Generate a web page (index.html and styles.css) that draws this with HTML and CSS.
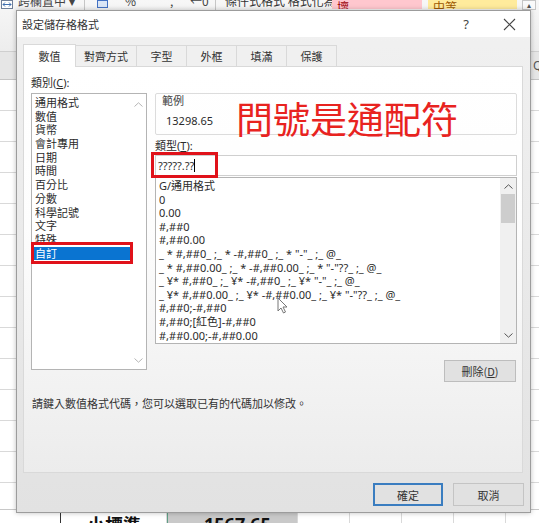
FILE: index.html
```html
<!DOCTYPE html>
<html lang="zh-Hant">
<head>
    <meta charset="UTF-8">
    <title>設定儲存格格式</title>
    <link rel="stylesheet" href="styles.css">
</head>
<body>

    <!-- Worksheet behind the dialog -->
    <div class="sheet">
        <div class="ribbon">
            <div class="ribbon-tools">
                <span class="tool merge-icon">
                    <svg width="12" height="9" viewBox="0 0 12 9"><rect x="0.5" y="0.5" width="11" height="8" fill="#fff" stroke="#6f7f99"/><path d="M2 4.5h8M2 4.5l2-2M2 4.5l2 2M10 4.5l-2-2M10 4.5l-2 2" stroke="#3f6fb0" fill="none"/></svg>
                </span>
                <span class="tool tool-text merge-text">跨欄置中 ▾</span>
                <span class="sep"></span>
                <span class="tool money-icon"></span>
                <span class="tool tool-text pct">%</span>
                <span class="tool tool-text comma">,</span>
                <span class="tool tool-text dec">←0</span>
                <span class="sep"></span>
                <span class="tool tool-text cond">條件式格式 格式化為</span>
                <span class="style-cell bad">壞</span>
                <span class="style-cell neutral">中等</span>
                <span class="style-more">▴</span>
            </div>
        </div>
        <div class="col-head"><span class="col-letter">Q</span></div>
        <div class="rows"></div>
        <div class="last-row">
            <div class="cell cell-first"></div>
            <div class="cell cell-name">小標準</div>
            <div class="cell cell-total">1567.65</div>
            <div class="cell cell-plain"></div>
            <div class="cell cell-plain"></div>
            <div class="cell cell-plain"></div>
            <div class="cell cell-plain"></div>
            <div class="cell cell-plain"></div>
        </div>
    </div>

    <!-- Format Cells dialog -->
    <div class="dialog">
        <div class="titlebar">
            <span class="title">設定儲存格格式</span>
            <span class="help">?</span>
            <span class="close">
                <svg width="13" height="13" viewBox="0 0 13 13"><path d="M1 1L12 12M12 1L1 12" stroke="#444" stroke-width="1.1"/></svg>
            </span>
        </div>

        <div class="tabs">
            <div class="tab active">數值</div>
            <div class="tab">對齊方式</div>
            <div class="tab">字型</div>
            <div class="tab">外框</div>
            <div class="tab">填滿</div>
            <div class="tab">保護</div>
        </div>

        <div class="panel">
            <div class="columns">
                <div class="col-left">
                    <div class="field-label">類別(<u>C</u>):</div>
                    <div class="listbox category-list">
                        <ul class="items">
                            <li>通用格式</li>
                            <li>數值</li>
                            <li>貨幣</li>
                            <li>會計專用</li>
                            <li>日期</li>
                            <li>時間</li>
                            <li>百分比</li>
                            <li>分數</li>
                            <li>科學記號</li>
                            <li>文字</li>
                            <li>特殊</li>
                            <li class="selected">自訂</li>
                        </ul>
                        <div class="scrollbar plain">
                            <span class="arrow"><svg width="9" height="5" viewBox="0 0 9 5"><path d="M0.5 4.5L4.5 0.8L8.5 4.5" fill="none" stroke="#b5b5b5"/></svg></span>
                            <span class="arrow"><svg width="9" height="5" viewBox="0 0 9 5"><path d="M0.5 0.5L4.5 4.2L8.5 0.5" fill="none" stroke="#b5b5b5"/></svg></span>
                        </div>
                    </div>
                </div>

                <div class="col-right">
                    <div class="sample">
                        <div class="sample-label">範例</div>
                        <div class="sample-value">13298.65</div>
                    </div>
                    <div class="field-label type-label">類型(<u>T</u>):</div>
                    <div class="type-input">?????.??<span class="caret"></span></div>
                    <div class="listbox format-list">
                        <ul class="items">
                            <li>G/通用格式</li>
                            <li>0</li>
                            <li>0.00</li>
                            <li>#,##0</li>
                            <li>#,##0.00</li>
                            <li>_ * #,##0_ ;_ * -#,##0_ ;_ * "-"_ ;_ @_</li>
                            <li>_ * #,##0.00_ ;_ * -#,##0.00_ ;_ * "-"??_ ;_ @_</li>
                            <li>_ ¥* #,##0_ ;_ ¥* -#,##0_ ;_ ¥* "-"_ ;_ @_</li>
                            <li>_ ¥* #,##0.00_ ;_ ¥* -#,##0.00_ ;_ ¥* "-"??_ ;_ @_</li>
                            <li>#,##0;-#,##0</li>
                            <li>#,##0;[紅色]-#,##0</li>
                            <li>#,##0.00;-#,##0.00</li>
                        </ul>
                        <div class="scrollbar">
                            <span class="arrow"><svg width="9" height="5" viewBox="0 0 9 5"><path d="M0.5 4.5L4.5 0.8L8.5 4.5" fill="none" stroke="#555"/></svg></span>
                            <span class="thumb"></span>
                            <span class="arrow down"><svg width="9" height="5" viewBox="0 0 9 5"><path d="M0.5 0.5L4.5 4.2L8.5 0.5" fill="none" stroke="#555"/></svg></span>
                        </div>
                    </div>
                    <div class="delete-row">
                        <button class="btn btn-delete">刪除(<u>D</u>)</button>
                    </div>
                </div>
            </div>

            <p class="hint">請鍵入數值格式代碼，您可以選取已有的代碼加以修改。</p>

            <!-- annotations drawn over the dialog -->
            <div class="callout">問號是通配符</div>
            <div class="mark mark-type"></div>
            <div class="mark mark-custom"></div>
            <svg class="pointer" width="12" height="17" viewBox="0 0 12 17"><path d="M1 1V14L4 11L6.5 16L8.5 15L6 10H10Z" fill="#fff" stroke="#777" stroke-width="1"/></svg>
        </div>

        <div class="footer">
            <button class="btn btn-default">確定</button>
            <button class="btn btn-cancel">取消</button>
        </div>
    </div>

</body>
</html>
```

FILE: styles.css
```css
* {
    box-sizing: border-box;
}

body {
    margin: 0;
    width: 539px;
    height: 523px;
    overflow: hidden;
    position: relative;
    background: #fff;
    font-family: "Noto Sans", "Noto Sans CJK TC", sans-serif;
    color: #2b2b2b;
}

/* ---------- worksheet ---------- */
.sheet {
    display: flex;
    flex-direction: column;
    height: 523px;
}

.ribbon {
    height: 52px;
    background: linear-gradient(#f7f7f7, #ededed);
    border-bottom: 1px solid #cfcfcf;
}

.ribbon-tools {
    display: flex;
    align-items: flex-start;
    height: 10px;
    overflow: hidden;
}

.tool {
    flex: none;
}

.tool-text {
    font-family: "Noto Sans CJK TC", sans-serif;
    font-size: 12px;
    line-height: 14px;
    margin-top: -6px;
    color: #444;
    overflow: hidden;
    white-space: nowrap;
}

.merge-icon {
    width: 18px;
    padding-left: 1px;
    line-height: 0;
}

.merge-text {
    width: 66px;
}

.sep {
    width: 1px;
    height: 10px;
    background: #c6c6c6;
    margin-right: 12px;
    flex: none;
}

.money-icon {
    width: 11px;
    height: 8px;
    border: 1px solid #4472c4;
    background: #dbe6f6;
    margin-right: 17px;
}

.pct {
    width: 45px;
}

.comma {
    width: 20px;
}

.dec {
    width: 25px;
}

.cond {
    width: 107px;
    margin-left: -3px;
    color: #333;
}

.style-cell {
    flex: none;
    height: 9px;
    width: 90px;
    margin-right: 6px;
    padding-left: 5px;
    font-family: "Noto Sans CJK TC", sans-serif;
    font-size: 12px;
    line-height: 14px;
    overflow: hidden;
}

.style-cell.bad {
    background: #ffc7ce;
    color: #9c0006;
}

.style-cell.neutral {
    background: #ffeb9c;
    color: #9c5700;
    width: 89px;
    margin-right: 5px;
}

.style-more {
    flex: none;
    width: 14px;
    height: 10px;
    border: 1px solid #c6c6c6;
    font-size: 8px;
    line-height: 8px;
    text-align: center;
    color: #555;
    background: #fafafa;
}

.col-head {
    height: 28px;
    background: #e6e6e6;
    border-bottom: 1px solid #c4c4c4;
    display: flex;
    justify-content: flex-end;
    align-items: center;
}

.col-letter {
    font-size: 12px;
    color: #555;
    width: 6px;
    overflow: hidden;
}

.rows {
    flex: 1;
    background:
        repeating-linear-gradient(to bottom, #fff 0 30px, #d9d9d9 30px 31px);
}

.last-row {
    height: 14px;
    display: flex;
    border-top: 1px solid #c8c8c8;
    overflow: hidden;
}

.cell {
    flex: none;
    border-right: 1px solid #d9d9d9;
    font-family: "Noto Sans CJK TC", sans-serif;
    font-weight: bold;
    font-size: 18px;
    line-height: 24px;
    padding-top: 2px;
    color: #111;
}

.cell-first {
    width: 61px;
    border-right: 1.5px solid #333;
}

.cell-name {
    width: 106px;
    padding-left: 26px;
}

.cell-total {
    width: 131px;
    background: #c9c9c9;
    border-left: 1px solid #5f9f86;
    padding-left: 36px;
    font-family: "Noto Sans", sans-serif;
}

.cell-plain {
    width: 52px;
}

/* ---------- dialog ---------- */
.dialog {
    position: absolute;
    left: 16px;
    top: 10px;
    width: 515px;
    height: 503px;
    border: 1px solid #9c9c9c;
    box-shadow: 0 0 5px rgba(0, 0, 0, 0.25);
    background: linear-gradient(#f1f1f1, #e2e2e2);
    display: flex;
    flex-direction: column;
    font-size: 11px;
}

.titlebar {
    height: 26px;
    flex: none;
    background: #fff;
    display: flex;
    align-items: center;
    padding-left: 5px;
}

.title {
    font-family: "Noto Sans CJK TC", sans-serif;
    font-size: 11px;
    color: #333;
}

.help {
    margin-left: auto;
    font-size: 13px;
    color: #444;
}

.close {
    margin: 0 14px 0 34px;
    line-height: 0;
}

.tabs {
    display: flex;
    align-items: flex-start;
    height: 22px;
    margin: 8px 0 0 6px;
    position: relative;
    z-index: 1;
    flex: none;
}

.tab {
    height: 21px;
    min-width: 51px;
    padding: 0 8px;
    border: 1px solid #d9d9d9;
    border-bottom: none;
    margin-right: -1px;
    background: #f0f0f0;
    font-family: "Noto Sans CJK TC", sans-serif;
    line-height: 20px;
    text-align: center;
    color: #333;
}

.tab.active {
    height: 23px;
    margin-top: -1px;
    min-width: 53px;
    background: #fff;
    line-height: 22px;
}

.panel {
    position: relative;
    flex: none;
    height: 407px;
    margin: -1px 7px 0 6px;
    padding: 9px 5px 0 7px;
    border: 1px solid #d9d9d9;
    background: linear-gradient(#fff, #fdfdfd 40%, #ececec);
}

.columns {
    display: grid;
    grid-template-columns: 116px 362px;
    column-gap: 8px;
    align-items: start;
}

.field-label {
    height: 14px;
    line-height: 14px;
    margin-bottom: 3px;
}

.type-label {
    margin: 4px 0 2px;
}

.listbox {
    display: flex;
    border: 1px solid #b4b4b4;
    background: #fff;
}

.items {
    flex: 1;
    list-style: none;
    margin: 0;
    padding: 1px 0 0 1px;
    overflow: hidden;
}

.items li {
    height: 13.7px;
    line-height: 13.7px;
    padding-left: 2px;
    white-space: nowrap;
}

.items li.selected {
    background: #0a74d1;
    color: #fff;
}

.category-list {
    height: 277px;
}

.category-list .items {
    padding-top: 2px;
}

.scrollbar {
    width: 16px;
    display: flex;
    flex-direction: column;
    background: #f0f0f0;
}

.scrollbar.plain {
    justify-content: space-between;
    background: #fff;
    padding: 5px 0 4px;
}

.arrow {
    height: 16px;
    display: flex;
    align-items: center;
    justify-content: center;
}

.scrollbar.plain .arrow {
    height: 10px;
}

.thumb {
    height: 29px;
    margin: 0 1px;
    background: #cdcdcd;
}

.arrow.down {
    margin-top: auto;
}

.sample {
    height: 42px;
    margin-top: 17px;
    border: 1px solid #dcdcdc;
    border-radius: 2px;
    padding: 0 0 0 6px;
}

.sample-label {
    height: 14px;
    line-height: 14px;
    color: #444;
}

.sample-value {
    margin-top: 6px;
    padding-left: 4px;
    line-height: 14px;
}

.type-input {
    height: 21px;
    border: 1px solid #cfcfcf;
    background: #fff;
    padding-left: 2px;
    line-height: 19px;
    display: flex;
    align-items: center;
}

.caret {
    width: 1px;
    height: 13px;
    background: #000;
}

.format-list {
    height: 167px;
    margin-top: 1px;
}

.format-list .items li {
    height: 13.6px;
    line-height: 13.6px;
}

.delete-row {
    display: flex;
    justify-content: flex-end;
    margin-top: 16px;
    padding-right: 1px;
}

.btn {
    font-family: "Noto Sans CJK TC", sans-serif;
    font-size: 11px;
    color: #333;
    background: #e1e1e1;
    border: 1px solid #bdbdbd;
    padding: 0;
    height: 23px;
}

.btn-delete {
    width: 72px;
    height: 22px;
}

.hint {
    margin: 14px 0 0 1px;
    line-height: 14px;
    font-family: "Noto Sans CJK TC", sans-serif;
    color: #333;
}

.callout {
    position: absolute;
    left: 212px;
    top: 31px;
    font-family: "Noto Sans CJK TC", sans-serif;
    font-size: 37px;
    line-height: 40px;
    color: #e8231f;
}

.mark {
    position: absolute;
    border: 3px solid #e0121a;
}

.mark-type {
    left: 127px;
    top: 85px;
    width: 67px;
    height: 26px;
}

.mark-custom {
    left: 7px;
    top: 175px;
    width: 102px;
    height: 22px;
}

.pointer {
    position: absolute;
    left: 253px;
    top: 230px;
}

.footer {
    display: flex;
    justify-content: flex-end;
    gap: 10px;
    padding: 10px 6px 0 0;
}

.btn-default {
    width: 70px;
    border: 2px solid #3a7dc0;
}

.btn-cancel {
    width: 71px;
    border-color: #c4c4c4;
}
```
